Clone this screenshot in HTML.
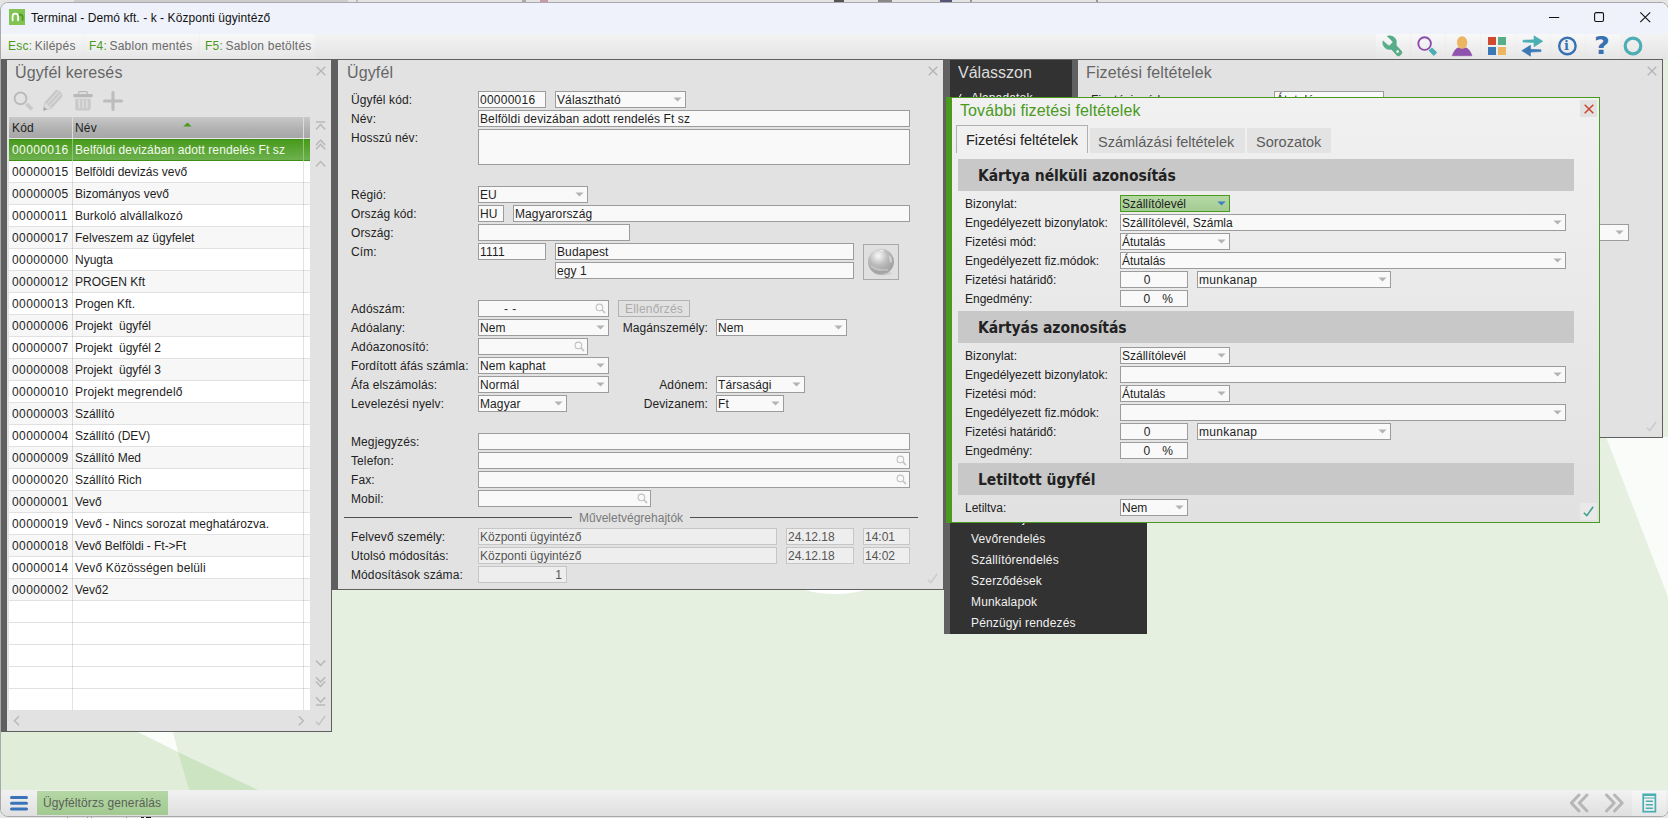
<!DOCTYPE html><html lang="hu"><head><meta charset="utf-8"><title>Terminal - Demó kft. - k - Központi ügyintéző</title><style>
html,body{margin:0;padding:0}
body{width:1668px;height:818px;overflow:hidden;position:relative;background:#e6e6e6;font-family:"Liberation Sans",sans-serif;font-size:12px;color:#1e1e1e}
div{position:absolute;box-sizing:border-box;white-space:pre}
svg{position:absolute;overflow:visible}
.t{letter-spacing:0.1px}
.lbl{color:#222}
.f{background:#f9f9f9;border:1px solid #9c9c9c;line-height:17px;padding-left:1px;overflow:hidden}
.fd{background:#eeeeee;border:1px solid #c6c6c6;line-height:17px;padding-left:1px;color:#555;overflow:hidden;letter-spacing:0 !important}
.ttl{font-size:16px;color:#666}
.row{left:9px;width:301px;height:22px;border-bottom:1px solid #e1e1e1;background:#fff}
.row.g{background:#f7f7f7}
.c1{left:3px;top:1px;height:21px;line-height:21px;letter-spacing:0.4px}
.c2{left:66px;top:1px;height:21px;line-height:21px;letter-spacing:0}
.mi{left:971px;height:21px;line-height:21px;color:#f0f0f0;font-size:12px;letter-spacing:0.15px}
.sec{left:958px;width:616px;height:32px;background:#c8c8c8;line-height:35px;padding-left:20px;font-weight:bold;font-size:15.5px;font-family:'DejaVu Sans Condensed','DejaVu Sans',sans-serif;color:#222;letter-spacing:-0.05px}
</style></head><body>
<div style="left:0px;top:0px;width:1668px;height:3px;background:#e4e4e4"></div>
<div style="left:74px;top:0px;width:274px;height:2px;background:#cdcdcd"></div>
<div style="left:356px;top:0px;width:2px;height:2px;background:#bdbdbd"></div>
<div style="left:522px;top:0px;width:4px;height:2px;background:#aaa"></div>
<div style="left:540px;top:0px;width:8px;height:2px;background:#c9a"></div>
<div style="left:834px;top:0px;width:10px;height:2px;background:#555"></div>
<div style="left:878px;top:0px;width:14px;height:2px;background:#888"></div>
<div style="left:940px;top:0px;width:12px;height:2px;background:#557"></div>
<div style="left:970px;top:0px;width:2px;height:2px;background:#999"></div>
<div style="left:1096px;top:0px;width:2px;height:2px;background:#999"></div>
<div style="left:67px;top:817px;width:1px;height:1px;background:#d98a3a"></div>
<div style="left:87px;top:817px;width:1px;height:1px;background:#999"></div>
<div style="left:91px;top:817px;width:1px;height:1px;background:#999"></div>
<div style="left:126px;top:817px;width:1px;height:1px;background:#999"></div>
<div style="left:141px;top:817px;width:3px;height:1px;background:#222"></div>
<div style="left:146px;top:817px;width:5px;height:1px;background:#111"></div>
<div id="win" style="left:0;top:2px;width:1669px;height:815px;border:1px solid #a9a9a9;border-radius:8px 8px 8px 8px;overflow:hidden;background:#e4f0df">
<div id="in" style="left:-1px;top:-3px;width:1668px;height:818px">
<svg style="left:0;top:60px" width="1668" height="731" viewBox="0 60 1668 731">
<rect x="0" y="60" width="1668" height="731" fill="#e5f0e0"/>
<polygon points="0,600 138,732 178,752 189,790 0,790" fill="#e0edd9"/>
<polygon points="0,60 0,732 138,732" fill="#e0edd9"/>
<polygon points="138,732 173,732 178,752" fill="#fbfdfa"/>
<polygon points="178,752 189,790 258,790" fill="#cde4c3"/>
<polygon points="1606,437 1668,437 1668,597" fill="#f9fcf8"/>
<ellipse cx="835" cy="580" rx="42" ry="14" fill="#ffffff"/>
</svg>
<div style="left:0px;top:3px;width:1668px;height:31px;background:#eff2fa"></div>
<svg style="left:9px;top:9px" width="16" height="16" viewBox="0 0 16 16" fill="none" stroke-width="1.8" stroke-linecap="round"><rect width="16" height="16" fill="#82c354" stroke="none"/><path d="M9.2 6.9 a2.3 2.3 0 0 1 4.4 0.9 V11" stroke="#4a9a1e"/><path d="M3.6 11.3 V7.4 a2.75 2.75 0 0 1 5.5 0 V11.3" stroke="#fff"/></svg>
<div class="t" style="left:31px;top:10px;height:16px;line-height:16px;color:#111;letter-spacing:0.07px">Terminal - Demó kft. - k - Központi ügyintéző</div>
<svg style="left:1540px;top:8px" width="120" height="20" viewBox="0 0 120 20" fill="none" stroke="#111" stroke-width="1.1"><path d="M9 9.5 H19.2"/><rect x="54.6" y="4.6" width="8.9" height="8.9" rx="1.5"/><path d="M100.3 4.3 L110.2 14.2 M110.2 4.3 L100.3 14.2"/></svg>
<div style="left:0px;top:34px;width:1668px;height:26px;background:linear-gradient(#f3f3f3,#e3e3e3)"></div>
<div style="left:1px;top:34px;width:82px;height:25px;background:linear-gradient(#f8f8f8,#e6e6e6)"></div>
<div style="left:84px;top:34px;width:115px;height:25px;background:linear-gradient(#f8f8f8,#e6e6e6)"></div>
<div style="left:200px;top:34px;width:115px;height:25px;background:linear-gradient(#f8f8f8,#e6e6e6)"></div>
<div class="t" style="left:8px;top:38px;height:16px;line-height:16px;letter-spacing:0.22px"><span style="color:#4a9a1e">Esc:</span><span style="color:#6a6a6a;margin-left:2.5px">Kilépés</span></div>
<div class="t" style="left:89px;top:38px;height:16px;line-height:16px;letter-spacing:0.22px"><span style="color:#4a9a1e">F4:</span><span style="color:#6a6a6a;margin-left:2.5px">Sablon mentés</span></div>
<div class="t" style="left:205px;top:38px;height:16px;line-height:16px;letter-spacing:0.22px"><span style="color:#4a9a1e">F5:</span><span style="color:#6a6a6a;margin-left:2.5px">Sablon betöltés</span></div>
<div style="left:1376px;top:34px;width:34px;height:25px;background:linear-gradient(#f8f8f8,#e6e6e6)"></div>
<div style="left:1411px;top:34px;width:34px;height:25px;background:linear-gradient(#f8f8f8,#e6e6e6)"></div>
<div style="left:1446px;top:34px;width:34px;height:25px;background:linear-gradient(#f8f8f8,#e6e6e6)"></div>
<div style="left:1481px;top:34px;width:34px;height:25px;background:linear-gradient(#f8f8f8,#e6e6e6)"></div>
<div style="left:1516px;top:34px;width:34px;height:25px;background:linear-gradient(#f8f8f8,#e6e6e6)"></div>
<div style="left:1551px;top:34px;width:34px;height:25px;background:linear-gradient(#f8f8f8,#e6e6e6)"></div>
<div style="left:1586px;top:34px;width:34px;height:25px;background:linear-gradient(#f8f8f8,#e6e6e6)"></div>
<svg style="left:0;top:0" width="1668" height="60" viewBox="0 0 1668 60">
<g transform="translate(1389.6,42.6)" fill="#56ad88">
 <path transform="rotate(-48)" d="M-3.1 -6.16 L-3.1 -0.2 A3.1 3.1 0 0 0 3.1 -0.2 L3.1 -6.16 A6.9 6.9 0 1 1 -3.1 -6.16 Z" stroke="#56ad88" stroke-width="0.5" stroke-linejoin="round"/>
 <g transform="rotate(-42)"><rect x="-3.3" y="2" width="6.6" height="14.6" rx="2.2"/>
 <circle cx="0" cy="12.0" r="1.4" fill="#f0f0f0"/></g>
</g>
<circle cx="1424.6" cy="43.6" r="6.3" fill="none" stroke="#8e4baf" stroke-width="1.9"/>
<path d="M1428.6 50.6 L1432 47.4 L1437.2 52.6 L1433.8 56 Z" fill="#4aaeb4"/>
<path d="M1452.2 55.7 C1453.6 52 1455 49.4 1457.6 48 L1466.6 48 C1469.2 49.4 1470.6 52 1472 55.7 Z" fill="#8f52ad" stroke="#8f52ad" stroke-width="0.6" stroke-linejoin="round"/>
<ellipse cx="1462.1" cy="42.5" rx="5.2" ry="6.3" fill="#ecb561"/>
<rect x="1488" y="37" width="8" height="8" fill="#d04a30"/><rect x="1498" y="37" width="8" height="8" fill="#56ad88"/>
<rect x="1488" y="47" width="8" height="8" fill="#3c78b5"/><rect x="1498" y="47" width="8" height="8" fill="#ecb561"/>
<path d="M1523 40.3 L1534 39.8 V35.8 L1542.8 41.2 L1534 46.8 V42.6 L1523 42 Z" fill="#4aaeb4" stroke="#4aaeb4" stroke-width="0.6" stroke-linejoin="round"/>
<path d="M1541 49.8 L1530.5 49.3 V45.2 L1521.8 50.7 L1530.5 56.2 V52.1 L1541 51.6 Z" fill="#3c78b5" stroke="#3c78b5" stroke-width="0.6" stroke-linejoin="round"/>
<circle cx="1567.4" cy="46" r="8.2" fill="none" stroke="#3571b3" stroke-width="2.4"/>
<circle cx="1633" cy="46" r="7.8" fill="none" stroke="#4aaeb4" stroke-width="3.2"/>
</svg>
<div class="" style="left:1564.1px;top:38px;height:16px;line-height:16px;font-family:'DejaVu Serif',serif;font-weight:bold;font-size:13px;color:#3571b3;letter-spacing:0">i</div>
<div class="" style="left:1594.0px;top:32.0px;height:28px;line-height:28px;transform:scaleX(1.1);transform-origin:0 50%;font-family:'DejaVu Sans',sans-serif;font-weight:bold;font-size:24.8px;color:#3571b3;letter-spacing:0">?</div>
<div style="left:0px;top:790px;width:1668px;height:27px;background:linear-gradient(#f1f1f1,#dfdfdf)"></div>
<svg style="left:9px;top:794px" width="20" height="18" viewBox="0 0 20 18" stroke="#3a74b8" stroke-width="3" stroke-linecap="round"><path d="M2.5 3.4 H17.5 M2.5 9.2 H17.5 M2.5 15 H17.5"/></svg>
<div style="left:37px;top:791px;width:131px;height:24px;background:linear-gradient(#b4d7a4,#a2c992)"></div>
<div class="t" style="left:43px;top:794px;height:18px;line-height:18px;color:#5a5f57;letter-spacing:0.1px">Ügyféltörzs generálás</div>
<svg style="left:1566px;top:792px" width="100" height="22" viewBox="1566 792 100 22" fill="none" stroke="#b6b6b6" stroke-width="3" stroke-linecap="round" stroke-linejoin="round"><path d="M1579 795 L1571.3 803 L1579 811 M1587 795 L1579.3 803 L1587 811"/><path d="M1606.5 795 L1614.2 803 L1606.5 811 M1614.5 795 L1622.2 803 L1614.5 811"/></svg>
<div style="left:1632px;top:791px;width:34px;height:25px;background:linear-gradient(#f6f6f6,#e6e6e6)"></div>
<svg style="left:1642px;top:793px" width="15" height="20" viewBox="1642 793 15 20" fill="none" stroke="#4aaeb3"><rect x="1643.2" y="794.3" width="12.2" height="17.4" stroke-width="1.7"/><path d="M1643 795 H1655.6" stroke-width="2"/><path d="M1643 798 H1655.6" stroke-width="1"/><path d="M1646.3 801.3 H1652.4 M1646.3 804.8 H1652.4 M1646.3 808.3 H1652.4" stroke-width="1.5" stroke-linecap="round"/></svg>
<div style="left:1px;top:59px;width:331px;height:673px;background:#e2e2e2;border-style:solid;border-color:#5f5f5f;border-width:1px 1px 1px 6px"></div>
<div class="t ttl" style="left:15px;top:63px;height:20px;line-height:20px;letter-spacing:0.12px">Ügyfél keresés</div>
<svg style="left:315.5px;top:65.5px" width="10" height="10" viewBox="0 0 10 10" stroke="#b4b4b4" stroke-width="1.3" stroke-linecap="butt"><path d="M0.7 0.7 L9.3 9.3 M9.3 0.7 L0.7 9.3"/></svg>
<svg style="left:0;top:84px" width="140" height="32" viewBox="0 84 140 32">
<circle cx="20.5" cy="98.4" r="5.9" fill="none" stroke="#bababa" stroke-width="1.9"/>
<path d="M25 105 L27.6 102.4 L33.3 108.1 L30.7 110.7 Z" fill="#c9c9c9"/>
<g transform="translate(43.3,110.6) rotate(-47.5)">
<path d="M7.5 -4.7 H21.5 Q25.3 -4.7 25.3 -0.9 V0.9 Q25.3 4.7 21.5 4.7 H7.5 Z" fill="#c8c8c8"/>
<path d="M8 -1.6 H24.6 M8 1.6 H24.6" stroke="#dcdcdc" stroke-width="1.1" fill="none"/>
<path d="M0 0 L7.5 -4.7 V4.7 Z" fill="#dddddd" stroke="#c8c8c8" stroke-width="0.7"/>
<path d="M0 0 L3.4 -2.1 V2.1 Z" fill="#a8a8a8"/>
</g>
<rect x="73.3" y="94" width="19.4" height="3.2" rx="1.2" fill="#b9b9b9"/>
<path d="M78.6 94 V92.7 Q78.6 91.6 79.7 91.6 H86.3 Q87.4 91.6 87.4 92.7 V94" fill="none" stroke="#b9b9b9" stroke-width="1.2"/>
<path d="M75.3 98.8 H90.7 V108.6 Q90.7 110.4 88.9 110.4 H77.1 Q75.3 110.4 75.3 108.6 Z" fill="#c9c9c9"/>
<path d="M79.2 99.5 V108.3 M83 99.5 V108.3 M86.8 99.5 V108.3" stroke="#dcdcdc" stroke-width="1.7"/>
<path d="M104.5 101 H121.5 M113 92.5 V109.5" stroke="#bcbcbc" stroke-width="3.1" stroke-linecap="round"/>
</svg>
<div style="left:9px;top:117px;width:301px;height:21px;background:linear-gradient(#c8c8c8,#b0b0b0 60%,#a6a6a6)"></div>
<div style="left:72px;top:117px;width:1px;height:21px;background:#dcdcdc"></div>
<div style="left:303px;top:117px;width:1px;height:21px;background:#dcdcdc"></div>
<div class="t" style="left:12px;top:118px;height:21px;line-height:21px;color:#222;letter-spacing:0.2px">Kód</div>
<div class="t" style="left:75px;top:118px;height:21px;line-height:21px;color:#222;letter-spacing:0.2px">Név</div>
<svg style="left:183px;top:122px" width="9" height="5" viewBox="0 0 9 5"><path d="M0.3 4.6 L4.5 0.4 L8.7 4.6 Z" fill="#4a9a1e"/></svg>
<div style="left:9px;top:138px;width:301px;height:1px;background:#e6e6e6"></div>
<div class="row" style="top:139px;background:linear-gradient(#489a1b,#6db14f);border-bottom:1px solid #3f8f17;border-top:1px solid #3f8f17;color:#f4faf0"><div class="c1" style="top:0px">00000016</div><div class="c2" style="top:0px;letter-spacing:0.1px">Belföldi devizában adott rendelés Ft sz</div></div>
<div class="row" style="top:161px"><div class="c1">00000015</div><div class="c2">Belföldi devizás vevő</div></div>
<div class="row g" style="top:183px"><div class="c1">00000005</div><div class="c2">Bizományos vevő</div></div>
<div class="row" style="top:205px"><div class="c1">00000011</div><div class="c2" style="letter-spacing:0.08px">Burkoló alvállalkozó</div></div>
<div class="row g" style="top:227px"><div class="c1">00000017</div><div class="c2">Felveszem az ügyfelet</div></div>
<div class="row" style="top:249px"><div class="c1">00000000</div><div class="c2">Nyugta</div></div>
<div class="row g" style="top:271px"><div class="c1">00000012</div><div class="c2">PROGEN Kft</div></div>
<div class="row" style="top:293px"><div class="c1">00000013</div><div class="c2">Progen Kft.</div></div>
<div class="row g" style="top:315px"><div class="c1">00000006</div><div class="c2">Projekt  ügyfél</div></div>
<div class="row" style="top:337px"><div class="c1">00000007</div><div class="c2">Projekt  ügyfél 2</div></div>
<div class="row g" style="top:359px"><div class="c1">00000008</div><div class="c2">Projekt  ügyfél 3</div></div>
<div class="row" style="top:381px"><div class="c1">00000010</div><div class="c2" style="letter-spacing:0.2px">Projekt megrendelő</div></div>
<div class="row g" style="top:403px"><div class="c1">00000003</div><div class="c2">Szállító</div></div>
<div class="row" style="top:425px"><div class="c1">00000004</div><div class="c2">Szállító (DEV)</div></div>
<div class="row g" style="top:447px"><div class="c1">00000009</div><div class="c2">Szállító Med</div></div>
<div class="row" style="top:469px"><div class="c1">00000020</div><div class="c2">Szállító Rich</div></div>
<div class="row g" style="top:491px"><div class="c1">00000001</div><div class="c2">Vevő</div></div>
<div class="row" style="top:513px"><div class="c1">00000019</div><div class="c2" style="letter-spacing:0.04px">Vevő - Nincs sorozat meghatározva.</div></div>
<div class="row g" style="top:535px"><div class="c1">00000018</div><div class="c2" style="letter-spacing:-0.06px">Vevő Belföldi - Ft-&gt;Ft</div></div>
<div class="row" style="top:557px"><div class="c1">00000014</div><div class="c2" style="letter-spacing:0.15px">Vevő Közösségen belüli</div></div>
<div class="row g" style="top:579px"><div class="c1">00000002</div><div class="c2">Vevő2</div></div>
<div class="row" style="top:601px"><div class="c1"></div><div class="c2"></div></div>
<div class="row" style="top:623px"><div class="c1"></div><div class="c2"></div></div>
<div class="row" style="top:645px"><div class="c1"></div><div class="c2"></div></div>
<div class="row" style="top:667px"><div class="c1"></div><div class="c2"></div></div>
<div class="row" style="top:689px"><div class="c1"></div><div class="c2"></div></div>
<div style="left:72px;top:139px;width:1px;height:571px;background:rgba(0,0,0,0.11)"></div>
<div style="left:303px;top:139px;width:1px;height:571px;background:rgba(0,0,0,0.11)"></div>
<div style="left:72px;top:139px;width:1px;height:22px;background:#8fc577"></div>
<div style="left:303px;top:139px;width:1px;height:22px;background:#8fc577"></div>
<svg style="left:312px;top:117px" width="18" height="615" viewBox="312 117 18 615" fill="none" stroke="#b9b9b9" stroke-width="1.5">
<path d="M316 122 H325.2"/><path d="M316 129.6 L320.6 124.6 L325.2 129.6"/>
<path d="M316 145 L320.6 140.2 L325.2 145 M316 149.2 L320.6 144.4 L325.2 149.2"/>
<path d="M316 166.4 L320.6 161.6 L325.2 166.4"/>
<path d="M316 660.5 L320.6 665.3 L325.2 660.5"/>
<path d="M316 677.3 L320.6 682.1 L325.2 677.3 M316 681.5 L320.6 686.3 L325.2 681.5"/>
<path d="M316 697.3 L320.6 702.1 L325.2 697.3"/><path d="M316 705 H325.2"/>
</svg>
<svg style="left:10px;top:714px" width="300" height="14" viewBox="10 714 300 14" fill="none" stroke="#b9b9b9" stroke-width="1.5"><path d="M19 716.3 L14.5 720.8 L19 725.3"/><path d="M298.8 716.3 L303.3 720.8 L298.8 725.3"/></svg>
<svg style="left:315.2px;top:715.2px" width="11" height="11" viewBox="0 0 11 11" fill="none" stroke="#c4c4c4" stroke-width="1.5"><path d="M0.8 6.8 L3.8 9.6 L10.2 0.8"/></svg>
<div style="left:332px;top:59px;width:612px;height:531px;background:#e2e2e2;border-style:solid;border-color:#5f5f5f;border-width:1px 1px 1px 6px"></div>
<div class="t ttl" style="left:347px;top:63px;height:20px;line-height:20px;letter-spacing:0.12px">Ügyfél</div>
<svg style="left:927.5px;top:65.5px" width="10" height="10" viewBox="0 0 10 10" stroke="#b4b4b4" stroke-width="1.3" stroke-linecap="butt"><path d="M0.7 0.7 L9.3 9.3 M9.3 0.7 L0.7 9.3"/></svg>
<div class="t lbl" style="left:351px;top:92px;height:17px;line-height:17px;">Ügyfél kód:</div>
<div class="f t" style="left:478px;top:91px;width:68px;height:17px;letter-spacing:0.25px">00000016</div>
<div class="f t" style="left:555px;top:91px;width:131px;height:17px;">Választható<svg style="right:3px;top:5px" width="9" height="5" viewBox="0 0 9 5"><path d="M0.4 0.5 H8.6 L4.5 4.6 Z" fill="#b3b3b3"/></svg></div>
<div class="t lbl" style="left:351px;top:111px;height:17px;line-height:17px;">Név:</div>
<div class="f t" style="left:478px;top:110px;width:432px;height:17px;">Belföldi devizában adott rendelés Ft sz</div>
<div class="t lbl" style="left:351px;top:130px;height:17px;line-height:17px;">Hosszú név:</div>
<div class="f t" style="left:478px;top:129px;width:432px;height:36px;"></div>
<div class="t lbl" style="left:351px;top:187px;height:17px;line-height:17px;">Régió:</div>
<div class="f t" style="left:478px;top:186px;width:110px;height:17px;">EU<svg style="right:3px;top:5px" width="9" height="5" viewBox="0 0 9 5"><path d="M0.4 0.5 H8.6 L4.5 4.6 Z" fill="#b3b3b3"/></svg></div>
<div class="t lbl" style="left:351px;top:206px;height:17px;line-height:17px;">Ország kód:</div>
<div class="f t" style="left:478px;top:205px;width:26px;height:17px;">HU</div>
<div class="f t" style="left:513px;top:205px;width:397px;height:17px;">Magyarország</div>
<div class="t lbl" style="left:351px;top:225px;height:17px;line-height:17px;">Ország:</div>
<div class="f t" style="left:478px;top:224px;width:152px;height:17px;"></div>
<div class="t lbl" style="left:351px;top:244px;height:17px;line-height:17px;">Cím:</div>
<div class="f t" style="left:478px;top:243px;width:68px;height:17px;letter-spacing:0.25px">1111</div>
<div class="f t" style="left:555px;top:243px;width:299px;height:17px;">Budapest</div>
<div class="f t" style="left:555px;top:262px;width:299px;height:17px;">egy 1</div>
<div style="left:863px;top:244px;width:36px;height:36px;background:#e0e0e0;border:1px solid #a9a9a9"></div>
<svg style="left:866px;top:247px" width="30" height="30" viewBox="0 0 30 30"><defs><radialGradient id="gl" cx="0.4" cy="0.27" r="0.8"><stop offset="0" stop-color="#f7f7f7"/><stop offset="0.12" stop-color="#e9e9e9"/><stop offset="0.45" stop-color="#bcbcbc"/><stop offset="0.8" stop-color="#a3a3a3"/><stop offset="1" stop-color="#b4b4b4"/></radialGradient></defs>
<ellipse cx="17" cy="26.6" rx="9" ry="1.8" fill="#d2d2d2"/><circle cx="15" cy="14.8" r="13" fill="url(#gl)"/>
<path d="M5 19 Q12 24.5 22 22.5" stroke="#cdcdcd" stroke-width="1.6" fill="none" opacity="0.7"/>
<path d="M23.2 8 Q26.5 11 25.5 16 Q23.5 15.5 23.5 12 Q22.5 10 23.2 8 Z" fill="#dedede" opacity="0.8"/>
<path d="M14.5 2.6 L16 4.5 L17.5 2.9" fill="none" stroke="#ededed" stroke-width="1.1"/></svg>
<div class="t lbl" style="left:351px;top:301px;height:17px;line-height:17px;">Adószám:</div>
<div class="f t" style="left:478px;top:300px;width:131px;height:17px;"><svg style="right:2px;top:2px" width="11" height="11" viewBox="0 0 11 11" fill="none"><circle cx="4.4" cy="4.4" r="3.3" stroke="#c2c2c2" stroke-width="1.1"/><path d="M6.9 6.9 L10 10" stroke="#c8c8c8" stroke-width="1.8"/></svg></div>
<div class="t" style="left:504px;top:301px;height:17px;line-height:17px;color:#333;letter-spacing:0.4px">- -</div>
<div style="left:618px;top:300px;width:72px;height:17px;border:1px solid #b2b2b2;background:#e1e1e1;color:#ababab;text-align:center;line-height:17px;letter-spacing:0.2px">Ellenőrzés</div>
<div class="t lbl" style="left:351px;top:320px;height:17px;line-height:17px;">Adóalany:</div>
<div class="f t" style="left:478px;top:319px;width:131px;height:17px;">Nem<svg style="right:3px;top:5px" width="9" height="5" viewBox="0 0 9 5"><path d="M0.4 0.5 H8.6 L4.5 4.6 Z" fill="#b3b3b3"/></svg></div>
<div class="t lbl" style="left:508px;width:200px;text-align:right;top:320px;height:17px;line-height:17px;">Magánszemély:</div>
<div class="f t" style="left:716px;top:319px;width:131px;height:17px;">Nem<svg style="right:3px;top:5px" width="9" height="5" viewBox="0 0 9 5"><path d="M0.4 0.5 H8.6 L4.5 4.6 Z" fill="#b3b3b3"/></svg></div>
<div class="t lbl" style="left:351px;top:339px;height:17px;line-height:17px;">Adóazonosító:</div>
<div class="f t" style="left:478px;top:338px;width:110px;height:17px;"><svg style="right:2px;top:2px" width="11" height="11" viewBox="0 0 11 11" fill="none"><circle cx="4.4" cy="4.4" r="3.3" stroke="#c2c2c2" stroke-width="1.1"/><path d="M6.9 6.9 L10 10" stroke="#c8c8c8" stroke-width="1.8"/></svg></div>
<div class="t lbl" style="left:351px;top:358px;height:17px;line-height:17px;">Fordított áfás számla:</div>
<div class="f t" style="left:478px;top:357px;width:131px;height:17px;">Nem kaphat<svg style="right:3px;top:5px" width="9" height="5" viewBox="0 0 9 5"><path d="M0.4 0.5 H8.6 L4.5 4.6 Z" fill="#b3b3b3"/></svg></div>
<div class="t lbl" style="left:351px;top:377px;height:17px;line-height:17px;">Áfa elszámolás:</div>
<div class="f t" style="left:478px;top:376px;width:131px;height:17px;">Normál<svg style="right:3px;top:5px" width="9" height="5" viewBox="0 0 9 5"><path d="M0.4 0.5 H8.6 L4.5 4.6 Z" fill="#b3b3b3"/></svg></div>
<div class="t lbl" style="left:508px;width:200px;text-align:right;top:377px;height:17px;line-height:17px;">Adónem:</div>
<div class="f t" style="left:716px;top:376px;width:89px;height:17px;">Társasági<svg style="right:3px;top:5px" width="9" height="5" viewBox="0 0 9 5"><path d="M0.4 0.5 H8.6 L4.5 4.6 Z" fill="#b3b3b3"/></svg></div>
<div class="t lbl" style="left:351px;top:396px;height:17px;line-height:17px;">Levelezési nyelv:</div>
<div class="f t" style="left:478px;top:395px;width:89px;height:17px;">Magyar<svg style="right:3px;top:5px" width="9" height="5" viewBox="0 0 9 5"><path d="M0.4 0.5 H8.6 L4.5 4.6 Z" fill="#b3b3b3"/></svg></div>
<div class="t lbl" style="left:508px;width:200px;text-align:right;top:396px;height:17px;line-height:17px;">Devizanem:</div>
<div class="f t" style="left:716px;top:395px;width:68px;height:17px;">Ft<svg style="right:3px;top:5px" width="9" height="5" viewBox="0 0 9 5"><path d="M0.4 0.5 H8.6 L4.5 4.6 Z" fill="#b3b3b3"/></svg></div>
<div class="t lbl" style="left:351px;top:434px;height:17px;line-height:17px;">Megjegyzés:</div>
<div class="f t" style="left:478px;top:433px;width:432px;height:17px;"></div>
<div class="t lbl" style="left:351px;top:453px;height:17px;line-height:17px;">Telefon:</div>
<div class="f t" style="left:478px;top:452px;width:432px;height:17px;"><svg style="right:2px;top:2px" width="11" height="11" viewBox="0 0 11 11" fill="none"><circle cx="4.4" cy="4.4" r="3.3" stroke="#c2c2c2" stroke-width="1.1"/><path d="M6.9 6.9 L10 10" stroke="#c8c8c8" stroke-width="1.8"/></svg></div>
<div class="t lbl" style="left:351px;top:472px;height:17px;line-height:17px;">Fax:</div>
<div class="f t" style="left:478px;top:471px;width:432px;height:17px;"><svg style="right:2px;top:2px" width="11" height="11" viewBox="0 0 11 11" fill="none"><circle cx="4.4" cy="4.4" r="3.3" stroke="#c2c2c2" stroke-width="1.1"/><path d="M6.9 6.9 L10 10" stroke="#c8c8c8" stroke-width="1.8"/></svg></div>
<div class="t lbl" style="left:351px;top:491px;height:17px;line-height:17px;">Mobil:</div>
<div class="f t" style="left:478px;top:490px;width:173px;height:17px;"><svg style="right:2px;top:2px" width="11" height="11" viewBox="0 0 11 11" fill="none"><circle cx="4.4" cy="4.4" r="3.3" stroke="#c2c2c2" stroke-width="1.1"/><path d="M6.9 6.9 L10 10" stroke="#c8c8c8" stroke-width="1.8"/></svg></div>
<div style="left:344px;top:517px;width:228px;height:1px;background:#4e4e4e"></div>
<div style="left:690px;top:517px;width:228px;height:1px;background:#4e4e4e"></div>
<div class="t" style="left:579px;top:510px;height:17px;line-height:17px;color:#7a7a7a;letter-spacing:0">Műveletvégrehajtók</div>
<div class="t lbl" style="left:351px;top:529px;height:17px;line-height:17px;">Felvevő személy:</div>
<div class="fd t" style="left:478px;top:528px;width:299px;height:17px;">Központi ügyintéző</div>
<div class="fd t" style="left:786px;top:528px;width:68px;height:17px;">24.12.18</div>
<div class="fd t" style="left:863px;top:528px;width:47px;height:17px;">14:01</div>
<div class="t lbl" style="left:351px;top:548px;height:17px;line-height:17px;">Utolsó módosítás:</div>
<div class="fd t" style="left:478px;top:547px;width:299px;height:17px;">Központi ügyintéző</div>
<div class="fd t" style="left:786px;top:547px;width:68px;height:17px;">24.12.18</div>
<div class="fd t" style="left:863px;top:547px;width:47px;height:17px;">14:02</div>
<div class="t lbl" style="left:351px;top:567px;height:17px;line-height:17px;">Módosítások száma:</div>
<div class="fd t" style="left:478px;top:566px;width:89px;height:17px;text-align:right;padding-right:4px">1</div>
<svg style="left:927.2px;top:573.2px" width="11" height="11" viewBox="0 0 11 11" fill="none" stroke="#cbcbcb" stroke-width="1.5"><path d="M0.8 6.8 L3.8 9.6 L10.2 0.8"/></svg>
<div style="left:944px;top:59px;width:203px;height:575px;background:#323232;border-style:solid;border-color:#5f5f5f #323232 #323232 #616161;border-width:1px 0 0 6px"></div>
<div class="t" style="left:958px;top:63px;height:20px;line-height:20px;font-size:16px;color:#dcdcdc;letter-spacing:0">Válasszon</div>
<svg style="left:950px;top:90px" width="16" height="16" viewBox="950 90 16 16" fill="none" stroke="#e8e8e8" stroke-width="1.2"><path d="M954.6 98.8 L957 101 L961.3 94"/></svg>
<div class="mi" style="top:88px">Alapadatok</div>
<div class="mi" style="top:508px">Vevői árajánlat</div>
<div class="mi" style="top:529px">Vevőrendelés</div>
<div class="mi" style="top:550px">Szállítórendelés</div>
<div class="mi" style="top:571px">Szerződések</div>
<div class="mi" style="top:592px">Munkalapok</div>
<div class="mi" style="top:613px">Pénzügyi rendezés</div>
<div style="left:1072px;top:59px;width:591px;height:379px;background:#e2e2e2;border-style:solid;border-color:#5f5f5f #5f5f5f #5f5f5f #616161;border-width:1px 1px 1px 6px"></div>
<div class="t ttl" style="left:1086px;top:63px;height:20px;line-height:20px;letter-spacing:0.12px">Fizetési feltételek</div>
<svg style="left:1646.5px;top:65.5px" width="10" height="10" viewBox="0 0 10 10" stroke="#b4b4b4" stroke-width="1.3" stroke-linecap="butt"><path d="M0.7 0.7 L9.3 9.3 M9.3 0.7 L0.7 9.3"/></svg>
<div class="t lbl" style="left:1091px;top:92px;height:17px;line-height:17px;">Fizetési mód:</div>
<div class="f t" style="left:1274px;top:91px;width:110px;height:17px;">Átutalás<svg style="right:3px;top:5px" width="9" height="5" viewBox="0 0 9 5"><path d="M0.4 0.5 H8.6 L4.5 4.6 Z" fill="#b3b3b3"/></svg></div>
<div class="f t" style="left:1498px;top:224px;width:131px;height:17px;"><svg style="right:4px;top:5px" width="9" height="5" viewBox="0 0 9 5"><path d="M0.4 0.5 H8.6 L4.5 4.6 Z" fill="#b3b3b3"/></svg></div>
<svg style="left:1646.2px;top:421.2px" width="11" height="11" viewBox="0 0 11 11" fill="none" stroke="#cbcbcb" stroke-width="1.5"><path d="M0.8 6.8 L3.8 9.6 L10.2 0.8"/></svg>
<div style="left:946px;top:97px;width:654px;height:426px;background:linear-gradient(#f1f1f1,#e1e1e1);border-style:solid;border-color:#4a9a1e;border-width:1px 1px 1px 6px"></div>
<div class="t" style="left:960px;top:101px;height:20px;line-height:20px;font-size:16px;color:#4a9a1e;letter-spacing:0.1px">További fizetési feltételek</div>
<div style="left:1580px;top:100px;width:17px;height:17px;background:#e2e2e2"></div>
<svg style="left:1584px;top:104px" width="10" height="10" viewBox="0 0 10 10" stroke="#c8452e" stroke-width="1.5" stroke-linecap="butt"><path d="M0.7 0.7 L9.3 9.3 M9.3 0.7 L0.7 9.3"/></svg>
<div style="left:956px;top:125px;width:132px;height:28px;background:#f0f0f0;border:1px solid #b0b0b0;border-bottom:none"></div>
<div class="t" style="left:966px;top:130px;height:20px;line-height:20px;font-size:14.5px;color:#222;letter-spacing:0">Fizetési feltételek</div>
<div style="left:1089.5px;top:128px;width:155.5px;height:25px;background:#e3e3e3"></div>
<div class="t" style="left:1098px;top:132px;height:20px;line-height:20px;font-size:14.5px;color:#5c5c5c;letter-spacing:0">Számlázási feltételek</div>
<div style="left:1247px;top:128px;width:84px;height:25px;background:#e3e3e3"></div>
<div class="t" style="left:1256px;top:132px;height:20px;line-height:20px;font-size:14.5px;color:#5c5c5c;letter-spacing:0">Sorozatok</div>
<div class="sec" style="top:159px">Kártya nélküli azonosítás</div>
<div class="t lbl" style="left:965px;top:196px;height:17px;line-height:17px;letter-spacing:0">Bizonylat:</div>
<div class="f t" style="left:1120px;top:195px;width:110px;height:17px;letter-spacing:0;background:linear-gradient(#b5d9a5,#a3cb92);border-color:#4a9a1e">Szállítólevél<svg style="right:3px;top:5px" width="9" height="5" viewBox="0 0 9 5"><path d="M0.4 0.5 H8.6 L4.5 4.6 Z" fill="#3c7fc0"/></svg></div>
<div class="t lbl" style="left:965px;top:215px;height:17px;line-height:17px;letter-spacing:0">Engedélyezett bizonylatok:</div>
<div class="f t" style="left:1120px;top:214px;width:446px;height:17px;letter-spacing:0;">Szállítólevél, Számla<svg style="right:3px;top:5px" width="9" height="5" viewBox="0 0 9 5"><path d="M0.4 0.5 H8.6 L4.5 4.6 Z" fill="#b3b3b3"/></svg></div>
<div class="t lbl" style="left:965px;top:234px;height:17px;line-height:17px;letter-spacing:0">Fizetési mód:</div>
<div class="f t" style="left:1120px;top:233px;width:110px;height:17px;letter-spacing:0;">Átutalás<svg style="right:3px;top:5px" width="9" height="5" viewBox="0 0 9 5"><path d="M0.4 0.5 H8.6 L4.5 4.6 Z" fill="#b3b3b3"/></svg></div>
<div class="t lbl" style="left:965px;top:253px;height:17px;line-height:17px;letter-spacing:0">Engedélyezett fiz.módok:</div>
<div class="f t" style="left:1120px;top:252px;width:446px;height:17px;letter-spacing:0;">Átutalás<svg style="right:3px;top:5px" width="9" height="5" viewBox="0 0 9 5"><path d="M0.4 0.5 H8.6 L4.5 4.6 Z" fill="#b3b3b3"/></svg></div>
<div class="t lbl" style="left:965px;top:272px;height:17px;line-height:17px;letter-spacing:0">Fizetési határidő:</div>
<div class="f t" style="left:1120px;top:271px;width:68px;height:17px;letter-spacing:0;text-align:center;padding:0 14px 0 0">0</div>
<div class="f t" style="left:1197px;top:271px;width:194px;height:17px;letter-spacing:0;letter-spacing:0.28px">munkanap<svg style="right:3px;top:5px" width="9" height="5" viewBox="0 0 9 5"><path d="M0.4 0.5 H8.6 L4.5 4.6 Z" fill="#b3b3b3"/></svg></div>
<div class="t lbl" style="left:965px;top:291px;height:17px;line-height:17px;letter-spacing:0">Engedmény:</div>
<div class="f t" style="left:1120px;top:290px;width:68px;height:17px;letter-spacing:0;"></div>
<div class="t" style="left:1143.5px;top:291px;height:17px;line-height:17px;">0</div>
<div class="t" style="left:1162.3px;top:291px;height:17px;line-height:17px;">%</div>
<div class="sec" style="top:311px">Kártyás azonosítás</div>
<div class="t lbl" style="left:965px;top:348px;height:17px;line-height:17px;letter-spacing:0">Bizonylat:</div>
<div class="f t" style="left:1120px;top:347px;width:110px;height:17px;letter-spacing:0;">Szállítólevél<svg style="right:3px;top:5px" width="9" height="5" viewBox="0 0 9 5"><path d="M0.4 0.5 H8.6 L4.5 4.6 Z" fill="#b3b3b3"/></svg></div>
<div class="t lbl" style="left:965px;top:367px;height:17px;line-height:17px;letter-spacing:0">Engedélyezett bizonylatok:</div>
<div class="f t" style="left:1120px;top:366px;width:446px;height:17px;letter-spacing:0;"><svg style="right:3px;top:5px" width="9" height="5" viewBox="0 0 9 5"><path d="M0.4 0.5 H8.6 L4.5 4.6 Z" fill="#b3b3b3"/></svg></div>
<div class="t lbl" style="left:965px;top:386px;height:17px;line-height:17px;letter-spacing:0">Fizetési mód:</div>
<div class="f t" style="left:1120px;top:385px;width:110px;height:17px;letter-spacing:0;">Átutalás<svg style="right:3px;top:5px" width="9" height="5" viewBox="0 0 9 5"><path d="M0.4 0.5 H8.6 L4.5 4.6 Z" fill="#b3b3b3"/></svg></div>
<div class="t lbl" style="left:965px;top:405px;height:17px;line-height:17px;letter-spacing:0">Engedélyezett fiz.módok:</div>
<div class="f t" style="left:1120px;top:404px;width:446px;height:17px;letter-spacing:0;"><svg style="right:3px;top:5px" width="9" height="5" viewBox="0 0 9 5"><path d="M0.4 0.5 H8.6 L4.5 4.6 Z" fill="#b3b3b3"/></svg></div>
<div class="t lbl" style="left:965px;top:424px;height:17px;line-height:17px;letter-spacing:0">Fizetési határidő:</div>
<div class="f t" style="left:1120px;top:423px;width:68px;height:17px;letter-spacing:0;text-align:center;padding:0 14px 0 0">0</div>
<div class="f t" style="left:1197px;top:423px;width:194px;height:17px;letter-spacing:0;letter-spacing:0.28px">munkanap<svg style="right:3px;top:5px" width="9" height="5" viewBox="0 0 9 5"><path d="M0.4 0.5 H8.6 L4.5 4.6 Z" fill="#b3b3b3"/></svg></div>
<div class="t lbl" style="left:965px;top:443px;height:17px;line-height:17px;letter-spacing:0">Engedmény:</div>
<div class="f t" style="left:1120px;top:442px;width:68px;height:17px;letter-spacing:0;"></div>
<div class="t" style="left:1143.5px;top:443px;height:17px;line-height:17px;">0</div>
<div class="t" style="left:1162.3px;top:443px;height:17px;line-height:17px;">%</div>
<div class="sec" style="top:463px">Letiltott ügyfél</div>
<div class="t lbl" style="left:965px;top:500px;height:17px;line-height:17px;letter-spacing:0">Letiltva:</div>
<div class="f t" style="left:1120px;top:499px;width:68px;height:17px;letter-spacing:0;">Nem<svg style="right:3px;top:5px" width="9" height="5" viewBox="0 0 9 5"><path d="M0.4 0.5 H8.6 L4.5 4.6 Z" fill="#b3b3b3"/></svg></div>
<div style="left:1580px;top:503px;width:17px;height:17px;background:#e9e9e9"></div>
<svg style="left:1583px;top:506px" width="11" height="11" viewBox="0 0 11 11" fill="none" stroke="#3aa08a" stroke-width="1.5"><path d="M0.8 6.8 L3.8 9.6 L10.2 0.8"/></svg>
</div></div></body></html>
